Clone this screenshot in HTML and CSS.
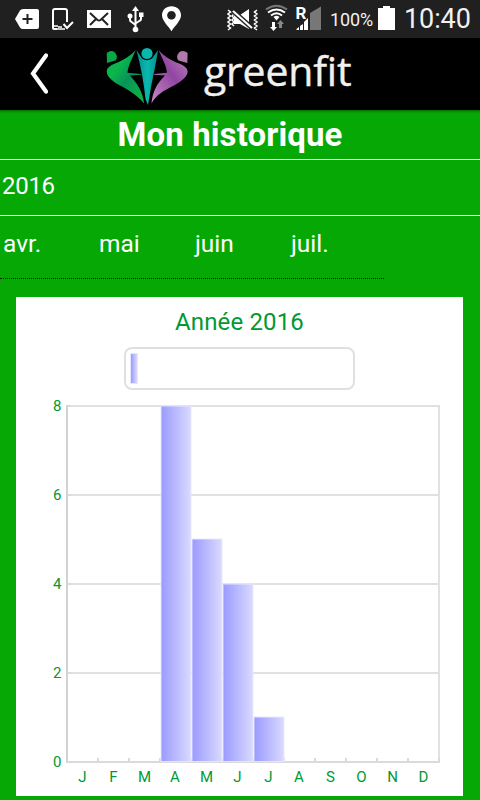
FILE: index.html
```html
<!DOCTYPE html>
<html lang="fr">
<head>
<meta charset="utf-8">
<title>greenfit</title>
<link rel="stylesheet" href="styles.css">
</head>
<body>
<div class="status">
  <svg class="status-left" width="200" height="38" viewBox="0 0 200 38">
    <path fill="#fff" d="M15 19L20 10.500Q21 9 23 9H37Q39 9 39 11V27Q39 29 37 29H23Q21 29 20 27.500Z"/>
    <path stroke="#222" stroke-width="2" d="M27.500 14V24M22.500 19H32.500"/>
    <g fill="none" stroke="#fff">
      <path stroke-width="2" d="M57 29H54Q53 29 53 28V11Q53 9 55 9H65Q67 9 67 11V22"/>
      <path stroke-width="1.500" d="M53 26H58M57 29H65M58 27H62"/>
      <path stroke-width="2" d="M63.500 24L67 28L73 22"/>
    </g>
    <path fill="#fff" d="M87 10H111V28H87Z"/>
    <path fill="none" stroke="#222" stroke-width="2" d="M90 13L97.500 20Q99 21 100.500 20L108 13M90 25L96 19M108 25L102 19"/>
    <g fill="none" stroke="#fff" stroke-width="2">
      <path d="M135.500 10V29M130 17V20Q130 21 131 21.500L135.500 25M141 15V19Q141 20 140 20.500L135.500 23.500"/>
    </g>
    <path fill="#fff" d="M132 11L135.500 6L139 11ZM139 12.500H143.500V17H139Z"/>
    <circle cx="130" cy="16" r="2.500" fill="#fff"/><circle cx="135.500" cy="29.500" r="2.800" fill="#fff"/>
    <path fill="#fff" fill-rule="evenodd" d="M171.500 6.200C166 6.200 162 10 162 15.200C162 21 169 26.500 171.500 31.200C174 26.500 181 21 181 15.200C181 10 177 6.200 171.500 6.200ZM171.500 11A4.300 4.300 0 1 1 171.400 11Z"/>
  </svg>
  <svg class="status-right" width="96" height="38" viewBox="227 0 96 38">
    <g fill="none" stroke="#fff" stroke-width="1.500">
      <path d="M228 10L230.500 12L228 14L230.500 16L228 18L230.500 20L228 22L230.500 24L228 26L230.500 28L228 30M232 12L234 14L232 16L234 18L232 20L234 22L232 24L234 26M257 10L254.500 12L257 14L254.500 16L257 18L254.500 20L257 22L254.500 24L257 26L254.500 28L257 30"/>
    </g>
    <path fill="#fff" d="M234 15H240L249 9V29L240 24H234Z"/>
    <path stroke="#222" stroke-width="5" d="M233 11L252 28"/>
    <path stroke="#fff" stroke-width="2" d="M233 11L252 28"/>
    <g fill="none" stroke-width="2">
      <path stroke="#777" d="M266 9.500Q276.500 2 287 9.500"/>
      <path stroke="#fff" d="M268 12.500Q276.500 6.500 285 12.500M271 15.500Q276.500 11 282 15.500"/>
    </g>
    <path fill="#fff" d="M273.500 17Q276.500 14.500 279.500 17L276.500 20.500ZM272 22H275V27H277L273.500 31L270 27H272Z"/>
    <path fill="#888" d="M279 28V24H277L280.500 20L284 24H282V28Z"/>
    <path fill="#777" d="M310 13L321 6.500V30H310Z"/>
    <path fill="#fff" d="M308 18V30H304V22ZM303 24V30H300V26ZM299 27V30H296.500V29Z"/>
    <text class="roaming" x="295.500" y="19">R</text>
  </svg>
  <span class="percent">100%</span>
  <svg class="battery" width="17" height="38" viewBox="0 0 17 38"><path fill="#fff" d="M0 8H5V6H12V8H17V30H0Z"/></svg>
  <span class="clock">10:40</span>
</div>
<header class="header">
  <svg class="back" width="18" height="42" viewBox="0 0 18 42"><path d="M16 2.500L3 20.500L16 38.500" fill="none" stroke="#fff" stroke-width="4.200" stroke-linecap="round"/></svg>
  <svg class="logo" width="82" height="58" viewBox="106 47 82 58">
    <defs>
      <linearGradient id="leaf" x1="0" y1="0" x2="1" y2="1"><stop offset="0" stop-color="#08a84a"/><stop offset=".3" stop-color="#0bb84b"/><stop offset=".55" stop-color="#079359"/><stop offset="1" stop-color="#10ba3c"/></linearGradient>
      <linearGradient id="plum" x1="1" y1="0" x2="0" y2="1"><stop offset="0" stop-color="#bc87bd"/><stop offset=".45" stop-color="#9146a1"/><stop offset="1" stop-color="#c58bc6"/></linearGradient>
      <linearGradient id="sea" x1="0" y1="0" x2="1" y2="0"><stop offset="0" stop-color="#078d8c"/><stop offset=".5" stop-color="#08b9b0"/><stop offset="1" stop-color="#078f92"/></linearGradient>
    </defs>
    <path fill="#08a747" d="M106.700 53Q111 49.500 115 52.500Q118.500 57 115.500 60.500L107 63Z"/>
    <path fill="url(#leaf)" d="M135.700 50C130 56 124 60 115 63.500C110 65.500 106.700 68 106.700 71.500C106.700 77 113 81.500 120 85.500C131 91 139 97 144 103.500C143 92 137 83 130 75.500L141 74.800V74L127.500 72.800C128 66 132 59 135.700 50Z"/>
    <path fill="#b17aad" d="M187.600 53Q183 49.500 179 52.500Q175.500 57 178.500 60.500L187.300 63Z"/>
    <path fill="url(#plum)" d="M158.500 50C164 56 170 60 179 63.500C184 65.500 187.600 68 187.600 71.500C187.600 77 181 81.500 174 85.500C163 91 156 95 151.500 103.500C152.500 92 157 83 165 75.500L154 74.800V74L167 72.800C166.500 66 162.500 59 158.500 50Z"/>
    <circle cx="147" cy="53.500" r="5.600" fill="#08b8ad"/>
    <path fill="url(#sea)" d="M136.500 50L142 58.500Q147 62 152 58.500L158 50C156 64 153 76 151 87L148 105L145.500 99C144 84 141 67 136.500 50Z"/>
  </svg>
  <span class="brand">greenfit</span>
</header>
<main class="main">
  <h1 class="title">Mon historique</h1>
  <div class="year">2016</div>
  <nav class="months"><span>avr.</span><span>mai</span><span>juin</span><span>juil.</span></nav>
  <section class="card">
    <h2 class="chart-title">Année 2016</h2>
    <div class="legend"><i class="swatch"></i></div>
    <svg class="chart" width="447" height="406" viewBox="16 390 447 406">
      <defs><linearGradient id="bar"><stop offset="0" stop-color="#9a9aff"/><stop offset="1" stop-color="#dadaff"/></linearGradient></defs>
      <g stroke="#e1e1e1" stroke-width="2" fill="none">
        <path d="M67 406H439M67 495H439M67 584H439M67 673H439M439 405V762"/>
        <path stroke="#d2d2d2" d="M67 405V763"/>
        <path stroke="#dadada" d="M67 762H440M67 406H71M67 495H71M67 584H71M67 673H71M98 758V762M129 758V762M160 758V762M191 758V762M222 758V762M253 758V762M284 758V762M315 758V762M346 758V762M377 758V762M408 758V762M439 758V762"/>
      </g>
      <g fill="url(#bar)" stroke="#e8e8ff" stroke-opacity=".9" stroke-width="1">
        <rect x="161" y="406" width="30" height="355.500"/>
        <rect x="192" y="539" width="30" height="222.500"/>
        <rect x="223" y="584" width="30" height="177.500"/>
        <rect x="254" y="717" width="30" height="44.500"/>
      </g>
      <g class="tick tick-y"><text x="61.500" y="411">8</text><text x="61.500" y="500">6</text><text x="61.500" y="589">4</text><text x="61.500" y="678">2</text><text x="61.500" y="767">0</text></g>
      <g class="tick tick-x"><text x="82.500" y="782">J</text><text x="113.500" y="782">F</text><text x="144.500" y="782">M</text><text x="175" y="782">A</text><text x="206.500" y="782">M</text><text x="237.500" y="782">J</text><text x="268.500" y="782">J</text><text x="299" y="782">A</text><text x="330.500" y="782">S</text><text x="361.500" y="782">O</text><text x="392.500" y="782">N</text><text x="423.500" y="782">D</text></g>
    </svg>
  </section>
</main>
</body>
</html>
```
FILE: styles.css
```css
* { box-sizing: border-box; }
body { margin: 0; width: 480px; height: 800px; overflow: hidden; background: #05a805; color: #fff; font-family: Roboto, sans-serif; }
svg { display: block; flex: none; }
.status { display: flex; height: 38px; background: #202020; line-height: 38px; color: #f2f2f2; white-space: nowrap; }
.status-right { margin-left: 27px; }
.roaming { font: 700 17px Roboto, sans-serif; fill: #fff; }
.percent { width: 48px; margin-left: 7px; font-size: 18px; padding-top: 1px; letter-spacing: -.1px; }
.clock { margin-left: 9px; font-size: 27px; letter-spacing: -.1px; }
.header { display: flex; height: 72px; background: #000; }
.back { margin: 15px 0 0 30px; }
.logo { margin: 9px 0 0 58px; }
.brand { margin-left: 16px; font: 41px/64px "Open Sans", sans-serif; letter-spacing: -.2px; color: #f0f0f0; white-space: nowrap; -webkit-text-stroke: .4px #f0f0f0; }
.main { box-shadow: inset 0 4px 3px -3px #046004; }
.title { margin: 0; height: 50px; border-bottom: 1px solid #fff; font-size: 33px; line-height: 50px; font-weight: 700; letter-spacing: .1px; text-align: center; padding-right: 20px; }
.year { height: 56px; border-bottom: 1px solid #fff; padding-left: 2px; font-size: 24px; line-height: 53px; letter-spacing: -.3px; }
.months { display: grid; grid-template-columns: repeat(4, 96px); width: 384px; height: 63px; border-bottom: 1px dotted #200020; font-size: 24.500px; line-height: 55px; }
.months span { padding-left: 3px; }
.card { width: 447px; height: 499px; margin: 18px 0 0 16px; background: #fff; overflow: hidden; }
.chart-title { height: 50px; margin: 0; font-size: 24px; line-height: 50px; font-weight: 400; letter-spacing: .15px; text-align: center; color: #009933; }
.legend { width: 231px; height: 43px; margin: 0 0 0 108px; padding: 4px; border: 2px solid #e0e0e0; border-radius: 8px; }
.swatch { display: block; width: 8px; height: 31px; border: 1px solid #e6e6ff; background: linear-gradient(to right, #9a9aff, #dadaff); }
.tick { fill: #009933; font-size: 15px; }
.tick-y { text-anchor: end; }
.tick-x { text-anchor: middle; }
```
